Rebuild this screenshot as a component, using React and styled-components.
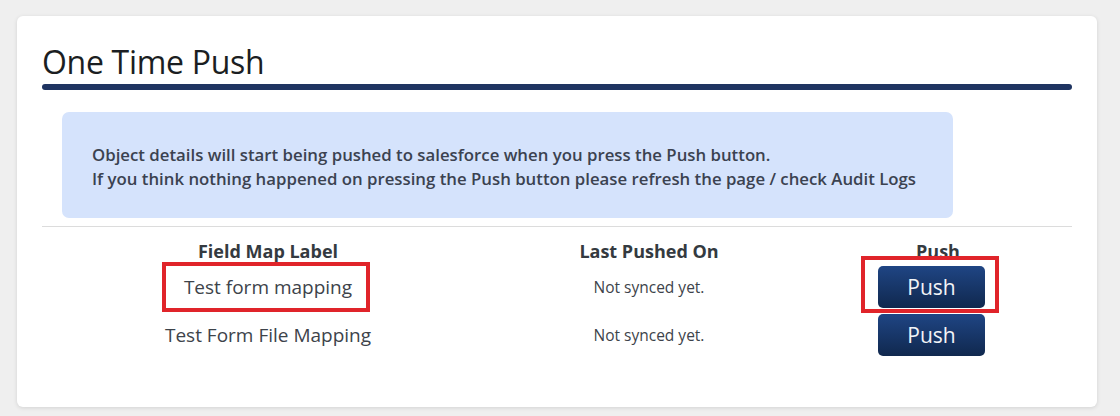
import React from 'react';
import styled, { createGlobalStyle, css } from 'styled-components';

const GlobalStyle = createGlobalStyle`
    html, body {
        margin: 0;
        background: #efefef;
    }
    body {
        font-family: 'Open Sans', 'Noto Sans', sans-serif;
        color: #343a40;
    }
`;

const Page = styled.div`
    padding: 16px 23px 9px 17px;
`;

const Card = styled.div`
    background: #ffffff;
    border-radius: 6px;
    box-shadow: 0 1px 4px rgba(0, 0, 0, 0.12);
    padding: 26px 25px 48px;
`;

const Title = styled.h2`
    margin: 0;
    font-size: 32px;
    font-weight: 500;
    line-height: 40px;
    color: #1b1e22;
    letter-spacing: -0.3px;
`;

const TitleRule = styled.div`
    height: 6px;
    margin-top: 2px;
    border-radius: 3px;
    background: #1f3461;
`;

const Notice = styled.div`
    margin: 22px 119px 0 20px;
    padding: 31px 30px 27px;
    background: #d5e3fc;
    border-radius: 7px;
    font-size: 16.8px;
    font-weight: 600;
    line-height: 24px;
    color: #3b4250;
`;

const Divider = styled.div`
    height: 1px;
    margin-top: 8px;
    background: #dcdcdc;
`;

const Table = styled.div`
    display: grid;
    grid-template-columns: 452px 310px 1fr;
    margin-top: 12px;
`;

const HeadCell = styled.div`
    text-align: center;
    font-size: 18px;
    font-weight: 700;
    line-height: 24px;
    color: #343a40;
`;

const Cell = styled.div`
    display: flex;
    align-items: center;
    justify-content: center;
    height: 48px;
    font-size: ${({ small }) => (small ? '15.5px' : '19px')};
    color: #3d434a;
`;

const annotated = css`
    position: relative;
    &::after {
        content: '';
        position: absolute;
        border: 4px solid #e0242a;
        pointer-events: none;
    }
`;

const Label = styled.span`
    display: inline-block;
    ${({ marked }) =>
        marked &&
        css`
            ${annotated};
            &::after {
                top: -12px;
                bottom: -12px;
                left: -22px;
                right: -18px;
            }
        `};
`;

const PushButton = styled.button`
    width: 107px;
    height: 42px;
    margin-right: 13px;
    border: none;
    border-radius: 5px;
    background: linear-gradient(180deg, #1f4584 0%, #10284e 100%);
    color: #f2f4f7;
    font-family: inherit;
    font-size: 21px;
    cursor: pointer;
    ${({ marked }) =>
        marked &&
        css`
            ${annotated};
            &::after {
                top: -10px;
                bottom: -5px;
                left: -17px;
                right: -14px;
            }
        `};
`;

const rows = [
    { label: 'Test form mapping', lastPushed: 'Not synced yet.', marked: true },
    { label: 'Test Form File Mapping', lastPushed: 'Not synced yet.' },
];

export default function App() {
    return (
        <Page>
            <GlobalStyle />
            <Card>
                <Title>One Time Push</Title>
                <TitleRule />
                <Notice>
                    Object details will start being pushed to salesforce when you press the Push button.
                    <br />
                    If you think nothing happened on pressing the Push button please refresh the page / check Audit Logs
                </Notice>
                <Divider />
                <Table>
                    <HeadCell>Field Map Label</HeadCell>
                    <HeadCell>Last Pushed On</HeadCell>
                    <HeadCell>Push</HeadCell>
                    {rows.map(row => (
                        <React.Fragment key={row.label}>
                            <Cell>
                                <Label marked={row.marked}>{row.label}</Label>
                            </Cell>
                            <Cell small>{row.lastPushed}</Cell>
                            <Cell>
                                <PushButton marked={row.marked}>Push</PushButton>
                            </Cell>
                        </React.Fragment>
                    ))}
                </Table>
            </Card>
        </Page>
    );
}
